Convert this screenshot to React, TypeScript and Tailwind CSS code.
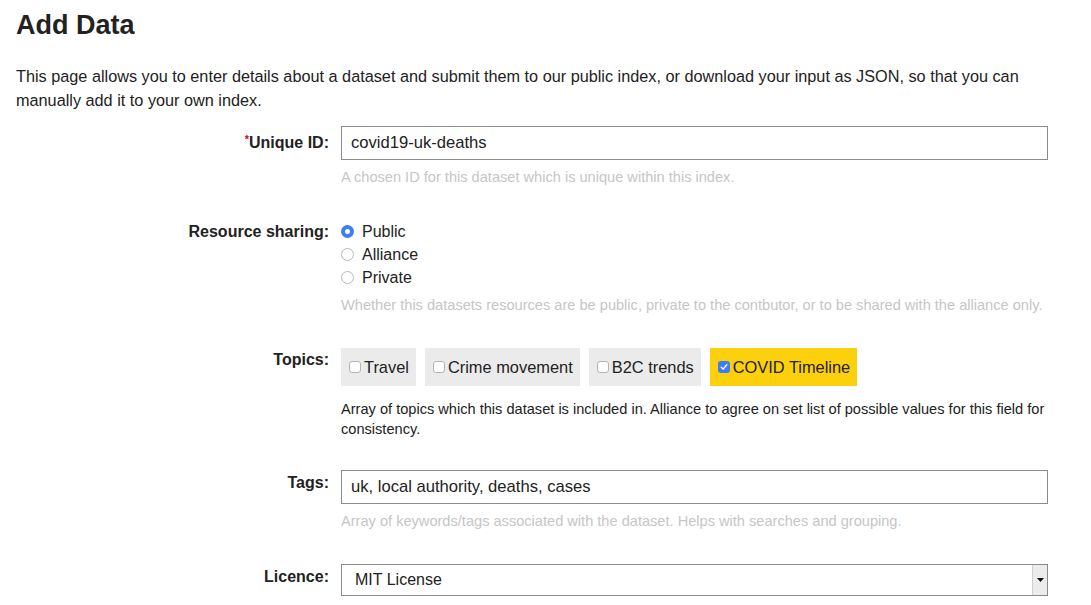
import { useState } from 'react'

const topicsList = ['Travel', 'Crime movement', 'B2C trends', 'COVID Timeline']

function Row({ label, required, labelPad, children }: { label: string; required?: boolean; labelPad: string; children: React.ReactNode }) {
  return (
    <div className="flex gap-[12px]">
      <div className={`w-[313px] shrink-0 text-right font-bold leading-[24px] ${labelPad}`}>
        {required && <sup className="text-[11px] text-[#d0021b] font-bold">*</sup>}
        {label}:
      </div>
      <div className="w-[707px]">{children}</div>
    </div>
  )
}

function Radio({ checked, label, onClick }: { checked: boolean; label: string; onClick: () => void }) {
  return (
    <div className="flex items-center h-[23px] cursor-pointer" onClick={onClick}>
      {checked ? (
        <span className="w-[13px] h-[13px] rounded-full bg-[#3b7df6] flex items-center justify-center">
          <span className="w-[5px] h-[5px] rounded-full bg-white" />
        </span>
      ) : (
        <span className="w-[13px] h-[13px] rounded-full border border-[#b8b8b8] bg-white" />
      )}
      <span className="ml-[8px]">{label}</span>
    </div>
  )
}

export default function App() {
  const [sharing, setSharing] = useState('Public')
  const [topics, setTopics] = useState<string[]>(['COVID Timeline'])

  const toggleTopic = (t: string) => {
    setTopics(topics.includes(t) ? topics.filter((x) => x !== t) : [...topics, t])
  }

  return (
    <div className="pl-[16px] pt-[9px] text-[16px] text-[#222] bg-white min-h-screen" style={{ fontFamily: '"Liberation Sans", Arial, sans-serif' }}>
      <h1 className="text-[27px] font-bold leading-[32px] text-[#222]">Add Data</h1>
      <p className="mt-[23px] w-[1030px] text-[16.25px] leading-[24px]">
        This page allows you to enter details about a dataset and submit them to our public index, or download your input as JSON, so that you can manually add it to your own index.
      </p>

      <div className="mt-[14px]">
        <Row label="Unique ID" required labelPad="pt-[5px]">
          <input
            type="text"
            defaultValue="covid19-uk-deaths"
            className="w-full h-[34px] px-[9px] border border-[#8c8c8c] outline-none text-[16.6px]"
          />
          <div className="mt-[7px] text-[14.6px] leading-[20px] text-[#c6c6c6]">A chosen ID for this dataset which is unique within this index.</div>
        </Row>

        <div className="h-[33px]" />

        <Row label="Resource sharing" labelPad="pt-[0px]">
          <div>
            {['Public', 'Alliance', 'Private'].map((s) => (
              <Radio key={s} label={s} checked={sharing === s} onClick={() => setSharing(s)} />
            ))}
          </div>
          <div className="mt-[6px] text-[14.6px] leading-[20px] text-[#c6c6c6]">
            Whether this datasets resources are be public, private to the contbutor, or to be shared with the alliance only.
          </div>
        </Row>

        <div className="h-[33px]" />

        <Row label="Topics" labelPad="pt-[0px]">
          <div className="flex gap-[9px]">
            {topicsList.map((t) => {
              const on = topics.includes(t)
              return (
                <button
                  key={t}
                  onClick={() => toggleTopic(t)}
                  className={`h-[38px] pl-[8px] pr-[7px] flex items-center ${on ? 'bg-[#fcd00c]' : 'bg-[#ebebeb]'}`}
                >
                  {on ? (
                    <span className="w-[12px] h-[12px] rounded-[3px] bg-[#3b7df6] flex items-center justify-center">
                      <svg width="8" height="8" viewBox="0 0 8 8">
                        <path d="M1.2 4.2 L3.2 6.1 L6.8 1.8" fill="none" stroke="white" strokeWidth="1.4" strokeLinecap="round" strokeLinejoin="round" />
                      </svg>
                    </span>
                  ) : (
                    <span className="w-[12px] h-[12px] rounded-[3px] border border-[#b5b5b5] bg-white" />
                  )}
                  <span className="ml-[3px] text-[16.4px] text-[#222]">{t}</span>
                </button>
              )
            })}
          </div>
          <div className="mt-[13px] text-[14.6px] leading-[20px] text-[#222]">
            Array of topics which this dataset is included in. Alliance to agree on set list of possible values for this field for consistency.
          </div>
        </Row>

        <div className="h-[31px]" />

        <Row label="Tags" labelPad="pt-[1px]">
          <input
            type="text"
            defaultValue="uk, local authority, deaths, cases"
            className="w-full h-[34px] px-[9px] border border-[#8c8c8c] outline-none text-[16.6px]"
          />
          <div className="mt-[7px] text-[14.6px] leading-[20px] text-[#c6c6c6]">Array of keywords/tags associated with the dataset. Helps with searches and grouping.</div>
        </Row>

        <div className="h-[33px]" />

        <Row label="Licence" labelPad="pt-[1px]">
          <div className="w-full h-[32px] border border-[#8c8c8c] flex items-stretch">
            <div className="flex-1 flex items-center pl-[13px]">MIT License</div>
            <div className="w-[15px] bg-[#ececec] border-l border-[#d0d0d0] flex items-center justify-center">
              <svg width="7" height="4" viewBox="0 0 7 4">
                <path d="M0 0 L7 0 L3.5 4 Z" fill="#111" />
              </svg>
            </div>
          </div>
        </Row>
      </div>
    </div>
  )
}
